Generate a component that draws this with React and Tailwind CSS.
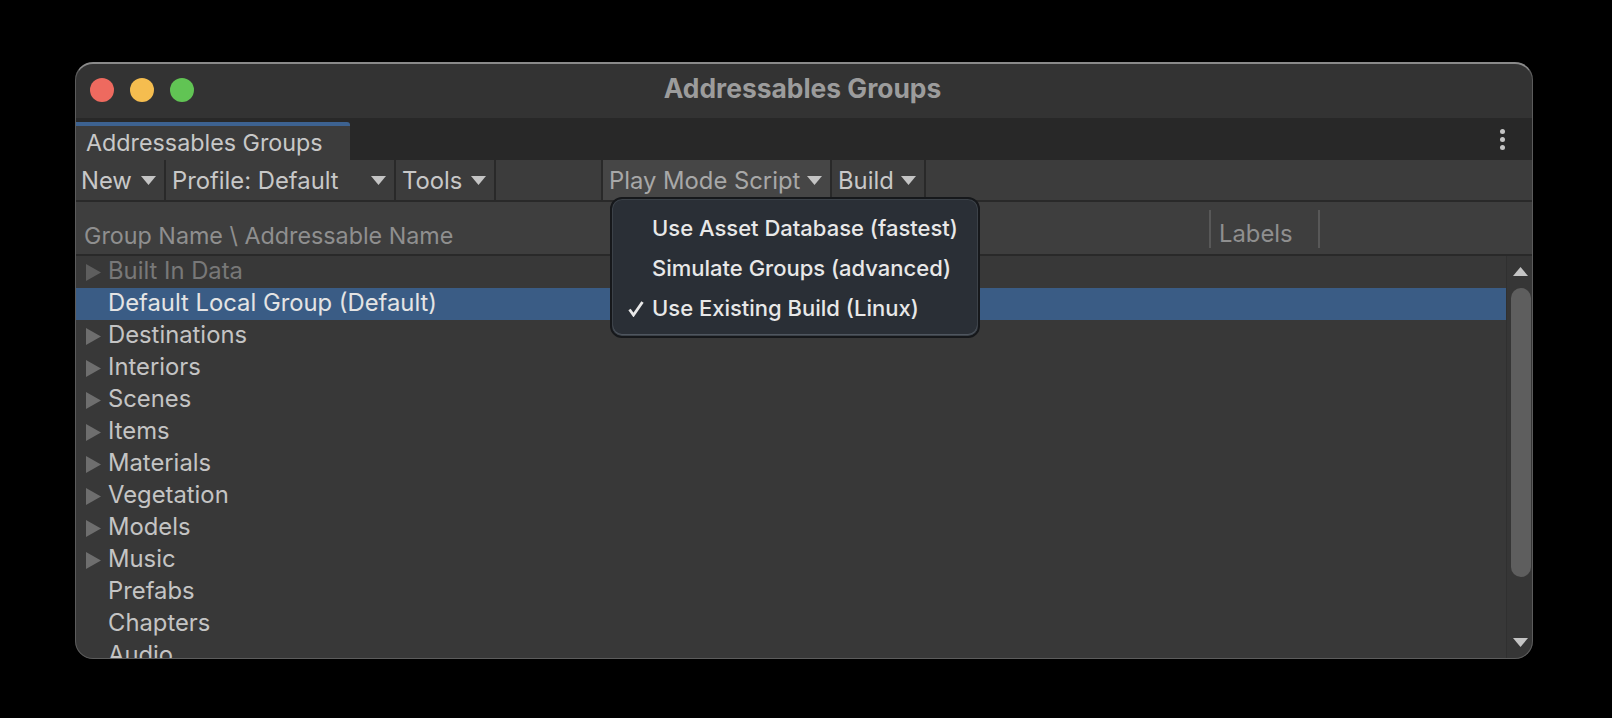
const font = { fontFamily: 'Inter, "Liberation Sans", sans-serif' };

const Caret = ({ className = '' }) => (
  <svg width="15" height="9" viewBox="0 0 15 9" className={className}>
    <path d="M0 0H15L7.5 9Z" fill="#c4c4c4" />
  </svg>
);

const Arrow = ({ dim }) => (
  <svg width="15" height="17" viewBox="0 0 15 17" className="shrink-0">
    <path d="M0 0L15 8.5L0 17Z" fill={dim ? '#5e5e5e' : '#6e6e6e'} />
  </svg>
);

const ToolButton = ({ label, width, active, dim }) => (
  <div
    className={`flex items-center justify-between h-full pl-[6px] pr-[8px] border-r-2 border-[#292929] text-[23.8px] ${active ? 'bg-[#464646]' : ''}`}
    style={{ width }}
  >
    <span className={`pt-[1px] ${dim ? 'text-[#a8a8a8]' : 'text-[#c8c8c8]'}`}>{label}</span>
    <Caret />
  </div>
);

const rows = [
  { name: 'Built In Data', arrow: true, dim: true },
  { name: 'Default Local Group (Default)', selected: true },
  { name: 'Destinations', arrow: true },
  { name: 'Interiors', arrow: true },
  { name: 'Scenes', arrow: true },
  { name: 'Items', arrow: true },
  { name: 'Materials', arrow: true },
  { name: 'Vegetation', arrow: true },
  { name: 'Models', arrow: true },
  { name: 'Music', arrow: true },
  { name: 'Prefabs' },
  { name: 'Chapters' },
  { name: 'Audio' },
];

const menuItems = [
  { label: 'Use Asset Database (fastest)' },
  { label: 'Simulate Groups (advanced)' },
  { label: 'Use Existing Build (Linux)', checked: true },
];

export default function App() {
  return (
    <div className="w-[1612px] h-[718px] bg-black pl-[75px] pt-[62px] overflow-hidden" style={font}>
      <div className="relative w-[1458px] h-[597px] rounded-[18px] bg-[#383838] overflow-hidden flex flex-col text-[23.3px] leading-none">
        {/* title bar */}
        <div className="relative h-[56px] shrink-0 bg-[#333333] flex items-center pl-[15px] gap-[16px]">
          <div className="w-[24px] h-[24px] rounded-full bg-[#ee6a5f]" />
          <div className="w-[24px] h-[24px] rounded-full bg-[#f5bd4f]" />
          <div className="w-[24px] h-[24px] rounded-full bg-[#61c454]" />
          <div className="absolute inset-0 flex items-center justify-center font-bold text-[26.4px] text-[#9c9c9c] pr-[3px] pb-[3px]">
            Addressables Groups
          </div>
        </div>

        {/* tab strip */}
        <div className="h-[42px] shrink-0 bg-[#282828] flex justify-between items-end">
          <div className="w-[275px] h-[38px] bg-[#3c3c3c] border-t-4 border-[#3d6290] rounded-tr-[3px] pl-[11px] pb-[1px] flex items-center text-[#c8c8c8]">
            Addressables Groups
          </div>
          <div className="h-full flex flex-col justify-center gap-[3px] pr-[28px]">
            <div className="w-[5px] h-[5px] rounded-full bg-[#c4c4c4]" />
            <div className="w-[5px] h-[5px] rounded-full bg-[#c4c4c4]" />
            <div className="w-[5px] h-[5px] rounded-full bg-[#c4c4c4]" />
          </div>
        </div>

        {/* toolbar */}
        <div className="h-[42px] shrink-0 bg-[#3c3c3c] flex border-b-2 border-[#292929]">
          <ToolButton label="New" width={91} />
          <ToolButton label="Profile: Default" width={230} />
          <ToolButton label="Tools" width={100} />
          <div className="w-[107px] h-full border-r-2 border-[#292929]" />
          <ToolButton label="Play Mode Script" width={229} active dim />
          <ToolButton label="Build" width={94} />
        </div>

        {/* column header */}
        <div className="relative h-[54px] shrink-0 bg-[#3e3e3e] border-b-2 border-[#292929] flex items-end pb-[7px] pl-[9px] text-[#8f8f8f]">
          <span>Group Name \ Addressable Name</span>
          <div className="absolute left-[1134px] top-[8px] w-[111px] h-[38px] border-x-2 border-[#585858] pl-[8px] pb-[2px] flex items-end text-[23.8px]">
            Labels
          </div>
        </div>

        {/* tree and scrollbar */}
        <div className="flex-1 flex min-h-0">
          <div className="flex-1 min-w-0 text-[23.8px]">
            {rows.map((row) => (
              <div
                key={row.name}
                className={`h-[32px] flex items-center pl-[11px] gap-[7px] ${row.selected ? 'bg-[#3a5c85] text-[#e4e4e4]' : row.dim ? 'text-[#787878]' : 'text-[#c4c4c4]'}`}
              >
                {row.arrow ? <Arrow dim={row.dim} /> : <div className="w-[15px] shrink-0" />}
                <span className="pb-[3px]">{row.name}</span>
              </div>
            ))}
          </div>
          <div className="w-[27px] shrink-0 bg-[#363636] border-l border-[#303030] flex flex-col items-center pt-[11px] pb-[11px] pl-[1px]">
            <svg width="15" height="9" viewBox="0 0 15 9" className="shrink-0">
              <path d="M0 9H15L7.5 0Z" fill="#c4c4c4" />
            </svg>
            <div className="w-[20px] h-[289px] mt-[12px] rounded-full bg-[#5e5e5e] shrink-0" />
            <div className="flex-1" />
            <Caret className="shrink-0 mb-[1px]" />
          </div>
        </div>

        {/* dropdown menu */}
        <div className="absolute left-[535px] top-[135px] w-[370px] h-[141px] rounded-[12px] bg-[#2a2f36] border-2 border-[#16181b] shadow-[inset_0_0_0_1px_#3c4249,inset_0_-1px_0_1px_#4f565f] flex flex-col justify-center gap-[18px] pl-[40px] pt-[1px] text-[22px] font-medium text-[#e8e8e8]">
          {menuItems.map((item) => (
            <div key={item.label} className="relative h-[22px] flex items-center whitespace-nowrap">
              {item.checked && (
                <svg width="16" height="16" viewBox="0 0 16 16" className="absolute left-[-24px] top-[4px]">
                  <path d="M1.5 8.5L5.5 14L14.5 1" fill="none" stroke="#e8e8e8" strokeWidth="2.8" />
                </svg>
              )}
              {item.label}
            </div>
          ))}
        </div>

        {/* window edge */}
        <div className="absolute inset-0 rounded-[18px] border border-[#5c5c5c] border-t-2 border-t-[#8a8a8a] pointer-events-none" />
      </div>
    </div>
  );
}
